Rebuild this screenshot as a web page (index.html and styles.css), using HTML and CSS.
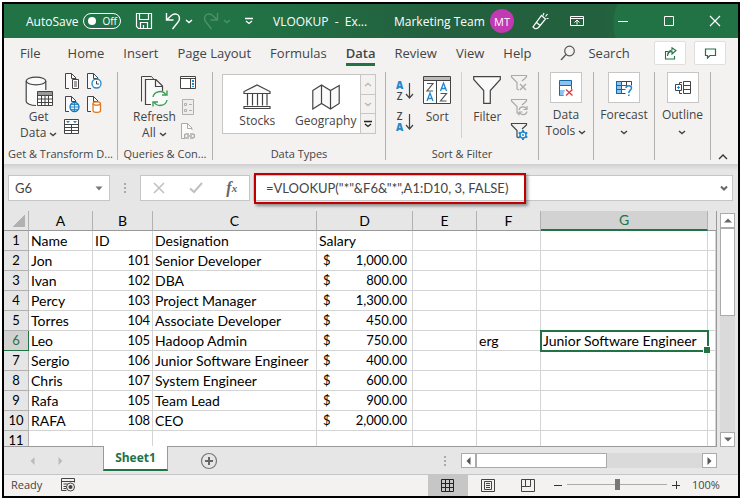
FILE: index.html
```html
<!DOCTYPE html>
<html lang="en">

<head>
	<meta charset="UTF-8">
	<meta name="viewport" content="width=device-width, initial-scale=1.0">
	<title>VLOOKUP - Excel</title>
	<link rel="stylesheet" href="styles.css">
</head>

<body>
	<svg class="sprite" aria-hidden="true">
		<symbol id="caret" viewBox="0 0 8 5"><path d="M1 1l3 2.500L7 1" fill="none" stroke="currentColor" stroke-width="1.500"/></symbol>
		<symbol id="doc" viewBox="0 0 16 18"><path d="M1.500 1.500h6l4.500 4.500v10.500H1.500z" fill="#fafafa"/><path d="M5 16.500H1.500v-15h6l4.500 4.500M7.500 1.500v5H12V8" fill="none" stroke="currentColor"/></symbol>
		<symbol id="funnel" viewBox="0 0 18 18"><path d="M12 7l4.500-4V1.500h-15V3l5.500 5.500V15l2 1" fill="none" stroke="currentColor" stroke-width="1.200"/></symbol>
	</svg>

	<div class="app">
		<header class="titlebar">
			<label class="autosave">AutoSave <span class="toggle"><input type="checkbox"><span>Off</span></span></label>
			<button class="save" aria-label="Save"><svg width="18" height="18" viewBox="0 0 18 18"><path d="M1.500 1.500h15v15h-13l-2-2zM4.500 1.500v6h9v-6M5.500 16v-5.500h7V16M8.500 16v-3" fill="none" stroke="#fff" stroke-width="1.200"/></svg></button>
			<button class="undo" aria-label="Undo"><svg width="16" height="18" viewBox="0 0 16 18"><path d="M1.500 1v7h7M2 7.500l5-4.500c3-2 6.500-1 7.300 2s-.5 4.500-2 6L7.500 17" fill="none" stroke="#fff" stroke-width="1.400"/></svg></button>
			<button class="undo-more" aria-label="Undo list"><svg width="8" height="5"><use href="#caret"/></svg></button>
			<button class="redo" aria-label="Redo" disabled><svg width="16" height="18" viewBox="0 0 16 18"><path d="M14.500 1v7h-7M14 7.500L9 3C6 1 2.500 2 1.700 5s.5 4.500 2 6l4.800 6" fill="none" stroke="currentColor" stroke-width="1.400"/></svg></button>
			<button class="redo-more" aria-label="Redo list" disabled><svg width="8" height="5"><use href="#caret"/></svg></button>
			<button class="customize" aria-label="Customize toolbar"><svg width="8" height="8" viewBox="0 0 8 8"><path d="M0 1.500h8M1 4l3 2.500L7 4" fill="none" stroke="#fff" stroke-width="1.300"/></svg></button>
			<span class="doc-title">VLOOKUP&nbsp; - &nbsp;Ex...</span>
			<span class="user">Marketing Team</span>
			<button class="avatar">MT</button>
			<button aria-label="Coming soon"><svg width="18" height="18" viewBox="0 0 18 18"><path d="M10.500 3.500l4 3.500-7 8.500c-1.500 1.300-3 1.500-4 .8l-1.500-1.300zM5.500 10.500l3.500 3M12 3.500l1-2.500M14.500 4.500l2-2.500M15.500 6.500h2" fill="none" stroke="#fff" stroke-width="1.200"/></svg></button>
			<button class="display" aria-label="Ribbon display options"><svg width="14" height="12" viewBox="0 0 14 12"><path d="M.5 1.500h13v9H.5zM.5 3.500h13M7 9.500V5.500M4.500 7.500L7 5l2.500 2.500" fill="none" stroke="#fff"/></svg></button>
			<div class="window-buttons">
				<button aria-label="Minimize"><svg width="12" height="12"><path d="M1 6.500h10" stroke="#fff"/></svg></button>
				<button aria-label="Maximize"><svg width="12" height="12"><path d="M1.500 1.500h9v9h-9z" fill="none" stroke="#fff"/></svg></button>
				<button aria-label="Close"><svg width="12" height="12"><path d="M1 1l10 10M11 1L1 11" stroke="#fff" stroke-width="1.200"/></svg></button>
			</div>
		</header>

		<nav class="tabs">
			<a href="#file" class="file">File</a>
			<a href="#home">Home</a>
			<a href="#insert">Insert</a>
			<a href="#layout">Page Layout</a>
			<a href="#formulas">Formulas</a>
			<a href="#data" class="active">Data</a>
			<a href="#review">Review</a>
			<a href="#view">View</a>
			<a href="#help">Help</a>
			<button class="search"><svg width="16" height="16" viewBox="0 0 16 16"><path d="M6 9.500L1 15" stroke="#555" stroke-width="1.300"/><circle cx="9.500" cy="6" r="4.800" fill="none" stroke="#555" stroke-width="1.200"/></svg>Search</button>
			<div class="tab-actions">
				<button aria-label="Share"><svg width="13" height="13" viewBox="0 0 13 13"><path d="M4 4.500H1.500v7.500h9V9M3.500 9C4 5.500 6 4.500 8 4.500V7l4-3.500L8 .8v2.200C5 3.500 3.500 5.500 3.500 9z" fill="none" stroke="#217346" stroke-width="1.100"/></svg></button>
				<button aria-label="Comments"><svg width="13" height="13" viewBox="0 0 13 13"><path d="M1.500 2h10v6.500H6L3.500 11V8.500h-2z" fill="none" stroke="#217346" stroke-width="1.200"/></svg></button>
			</div>
		</nav>

		<section class="ribbon">
			<div class="group get-data">
				<div class="tools">
					<button class="big">
						<svg width="28" height="32" viewBox="0 0 28 32"><path d="M1.200 5v20.500c0 2 4.500 4 9.800 4h9.800V5z" fill="#fafafa"/><ellipse cx="11" cy="5" rx="9.800" ry="3.800" fill="#fafafa" stroke="#444" stroke-width="1.200"/><path d="M1.200 5v20.500c0 2 4.500 4 9.800 4M20.800 5v9" fill="none" stroke="#444" stroke-width="1.200"/><path d="M12.500 15.500h15v14h-15z" fill="#fff" stroke="#444"/><path d="M13 16h14v3H13z" fill="#999"/><path d="M12.500 19.500h15M12.500 23h15M12.500 26.500h15M16.500 19v10.500M20 19v10.500M23.500 19v10.500" stroke="#444"/></svg>
						<span>Get<br>Data <svg width="8" height="5"><use href="#caret"/></svg></span>
					</button>
					<div class="small-grid">
						<button aria-label="From text"><svg width="16" height="18"><use href="#doc"/><path d="M8.500 7.500h6v9h-6z" fill="#fff" stroke="#444"/><path d="M10 10h3M10 12h3M10 14h3" stroke="#444"/></svg></button>
						<button aria-label="Recent sources"><svg width="16" height="18"><use href="#doc"/><circle cx="10.500" cy="11.500" r="4.500" fill="#fff" stroke="#2188cc" stroke-width="1.300"/><path d="M10.500 9v3H13" fill="none" stroke="#444"/></svg></button>
						<button aria-label="From web"><svg width="16" height="18"><use href="#doc"/><circle cx="10.500" cy="12" r="4.500" fill="#d8edfa" stroke="#1677b8" stroke-width="1.300"/><path d="M6 12h9M10.500 7.500v9M7 9.500h7M7 14.500h7" stroke="#1677b8" stroke-width=".8"/></svg></button>
						<button aria-label="Existing connections"><svg width="16" height="18"><use href="#doc"/><path d="M7 8.500v7c0 2.500 7.500 2.500 7.500 0v-7" fill="#fff" stroke="#e07a22" stroke-width="1.300"/><ellipse cx="10.700" cy="8.500" rx="3.700" ry="1.700" fill="#fff" stroke="#e07a22" stroke-width="1.300"/></svg></button>
						<button aria-label="From table"><svg width="16" height="18"><path d="M.5 1.500h14v14H.5z" fill="#fff" stroke="#444"/><path d="M.5 6.500h14M.5 9.500h14M.5 12.500h14M7.500 6.500v9" stroke="#444"/><path d="M2 3h4L4 5.300zM9 3h4l-2 2.300z" fill="#2188cc"/></svg></button>
					</div>
				</div>
				<h2>Get &amp; Transform D...</h2>
			</div>

			<div class="group queries">
				<div class="tools">
					<button class="big">
						<svg width="28" height="32" viewBox="0 0 28 32"><path d="M1.500 25.500V.5h10l2.500 3" fill="none" stroke="#444"/><path d="M5.500 3.500h11l6 6v19h-17z" fill="#fafafa"/><path d="M11 28.500H5.500v-25h10.500l6.500 6.500v5M15.500 4v6.500h7" fill="none" stroke="#444" stroke-width="1.200"/><circle cx="20" cy="22.500" r="8" fill="#fafafa"/><path d="M13 21c1-6 10-7.500 13-2M27 14.500V19h-5M27 24c-1 6-10 7.500-13 2M13 30.500V26h5" fill="none" stroke="#3a9e55" stroke-width="1.400"/></svg>
						<span>Refresh<br>All <svg width="8" height="5"><use href="#caret"/></svg></span>
					</button>
					<div class="small-stack">
						<button aria-label="Queries and connections"><svg width="16" height="18"><path d="M.5 2.500h15v12H.5z" fill="#fff" stroke="#444"/><path d="M.5 4.500h15M10.500 4.500v10" stroke="#444"/><path d="M13 6v7" stroke="#2188cc" stroke-width="2" stroke-dasharray="2 1"/></svg></button>
						<button aria-label="Properties" disabled><svg width="16" height="18"><path d="M2.500 1.500h11v15h-11z" fill="#eee" stroke="#b0b0b0"/><path d="M4.500 5.500h2v2h-2zM4.500 11.500h2v2h-2zM9 6.500h3M9 12.500h3" fill="none" stroke="#b0b0b0"/></svg></button>
						<button aria-label="Edit links" class="faded" disabled><svg width="16" height="18"><use href="#doc"/><path d="M9 12H6.500a2 2 0 0 0 0 4H9M10 12h2.500a2 2 0 0 1 0 4H10M7 14h5" fill="none" stroke="#aaa" stroke-width="1.300"/></svg></button>
					</div>
				</div>
				<h2>Queries &amp; Con...</h2>
			</div>

			<div class="group types">
				<div class="gallery">
					<button><svg width="28" height="26" viewBox="0 0 28 26"><path d="M1 9.500V7.500L14 1l13 6.500v2zM1 24.500v-2h26v2zM4.500 9.500v12M9.500 9.500v12M14.500 9.500v12M19.500 9.500v12M24 9.500v12" fill="#fafafa" stroke="#444" stroke-width="1.200"/></svg>Stocks</button>
					<button><svg width="28" height="26" viewBox="0 0 28 26"><path d="M.8 6.500L9.500 1l9 5.500 8.700-5v18L18.500 25l-9-5.500L.8 25zM9.500 1v18.500M18.500 6.500V25" fill="#fafafa" stroke="#444" stroke-width="1.200"/></svg>Geography</button>
					<div class="gallery-scroll">
						<button aria-label="Up" disabled><svg width="8" height="5"><path d="M1 4l3-2.500L7 4" fill="none" stroke="currentColor" stroke-width="1.500"/></svg></button>
						<button aria-label="Down" disabled><svg width="8" height="5"><use href="#caret"/></svg></button>
						<button aria-label="More"><svg width="8" height="8" viewBox="0 0 8 8"><path d="M0 1.500h8M1 4l3 2.500L7 4" fill="none" stroke="#222" stroke-width="1.300"/></svg></button>
					</div>
				</div>
				<h2>Data Types</h2>
			</div>

			<div class="group sort-filter">
				<div class="tools">
					<div class="sort-stack">
						<button aria-label="Sort A to Z"><span class="letters"><b>A</b><span>Z</span></span><svg width="9" height="18"><path d="M4.500 1v15M1 12l3.500 4L8 12" fill="none" stroke="#444" stroke-width="1.200"/></svg></button>
						<button aria-label="Sort Z to A"><span class="letters"><span>Z</span><b>A</b></span><svg width="9" height="18"><path d="M4.500 1v15M1 12l3.500 4L8 12" fill="none" stroke="#444" stroke-width="1.200"/></svg></button>
					</div>
					<button class="big sort">
						<svg width="28" height="32" viewBox="0 0 28 32"><path d="M.5.5h27v27H.5z" fill="#fff" stroke="#444"/><path d="M1 1h26v3H1z" fill="#bbb"/><path d="M.5 4.500h27M13.500 4.500v23" stroke="#444"/><path d="M4 7.500h6L4 15h6M17.500 17.500h6l-6 7.500h6" fill="none" stroke="#555" stroke-width="1.200"/><path d="M4 25l3-8 3 8M5 22.500h4M17.500 15l3-8 3 8M18.500 12.500h4" fill="none" stroke="#2188cc" stroke-width="1.300"/></svg>
						<span>Sort</span>
					</button>
					<button class="big filter">
						<svg width="28" height="32" viewBox="0 0 28 32"><path d="M.7.7h26.600v2.800l-10 11V27.300h-6.600V14.500L.7 3.500z" fill="#fafafa" stroke="#444" stroke-width="1.200"/></svg>
						<span>Filter</span>
					</button>
					<div class="small-stack">
						<button aria-label="Clear" class="faded" disabled><svg width="18" height="18"><use href="#funnel"/><path d="M10 10l6 6M16 10l-6 6" stroke="#aaa" stroke-width="1.400"/></svg></button>
						<button aria-label="Reapply" class="faded" disabled><svg width="18" height="18"><use href="#funnel"/><path d="M9 12c1-4 6-4 7.500-1M17 8v3.500h-3.500M17 13.500c-1 4-6 4-7.500 1M9 17.500V14h3.500" fill="none" stroke="#aaa" stroke-width="1.200"/></svg></button>
						<button aria-label="Advanced"><svg width="18" height="18"><use href="#funnel"/><circle cx="13" cy="13" r="3" fill="#fff" stroke="#2188cc" stroke-width="1.500"/><path d="M13 8v2M13 16v2M8.700 10.500l1.700 1M15.600 14.500l1.700 1M8.700 15.500l1.700-1M15.600 11.500l1.700-1" stroke="#2188cc" stroke-width="2"/><circle cx="13" cy="13" r="1" fill="#2188cc"/></svg></button>
					</div>
				</div>
				<h2>Sort &amp; Filter</h2>
			</div>

			<div class="group data-tools">
				<button class="boxed">
					<span class="box"><svg width="18" height="18"><path d="M2.500 1.500h12v5h-12z" fill="#8ac4ee" stroke="#1766a6"/><path d="M14.500 6.500v4M2.500 6.500v10h4" fill="none" stroke="#1766a6"/><path d="M3 11h5l-2 5.500H3z" fill="#8ac4ee"/><path d="M9 10.500l6.500 6M15.500 10.500L9 16.500" stroke="#e0393e" stroke-width="1.400"/></svg></span>
					<span>Data<br>Tools <svg width="8" height="5"><use href="#caret"/></svg></span>
				</button>
			</div>
			<div class="group forecast">
				<button class="boxed">
					<span class="box"><svg width="18" height="18"><path d="M1.500 2.500h15v4M1.500 2.500v12h9M11.500 2.500v5" fill="none" stroke="#444"/><path d="M1.500 2.500h5v12h-5z" fill="#8ac4ee" stroke="#1766a6"/><path d="M1.500 6.500h10M1.500 10.500h9M6.500 2.500v12" stroke="#1766a6"/><path d="M11 9c0-3 5.500-3 5.500 0 0 2-2.700 2.300-2.700 5M13.800 15.500V17" fill="none" stroke="#2188cc" stroke-width="1.500"/></svg></span>
					<span>Forecast<br><svg width="8" height="5"><use href="#caret"/></svg></span>
				</button>
			</div>
			<div class="group outline">
				<button class="boxed">
					<span class="box"><svg width="18" height="18"><path d="M9.500 2.500h7v12h-7zM9.500 6.500h7M9.500 10.500h7M8 3.500H5.500V6M8 14.500H5.500V12" fill="none" stroke="#444"/><path d="M1.500 5.500h6v6h-6z" fill="#fff" stroke="#444"/><path d="M4.500 7v3M3 8.500h3" stroke="#2188cc"/></svg></span>
					<span>Outline<br><svg width="8" height="5"><use href="#caret"/></svg></span>
				</button>
			</div>
			<button class="collapse" aria-label="Collapse ribbon"><svg width="10" height="6"><path d="M1 5l4-4 4 4" fill="none" stroke="#333" stroke-width="1.300"/></svg></button>
		</section>

		<section class="formula-bar">
			<div class="name-box">
				<input type="text" value="G6" aria-label="Name box">
				<button aria-label="Names"><svg width="8" height="5"><path d="M.5.5h7L4 4.500z" fill="#777"/></svg></button>
			</div>
			<span class="dots"></span>
			<div class="formula-buttons">
				<button aria-label="Cancel"><svg width="12" height="12"><path d="M1 1l10 10M11 1L1 11" stroke="#c0c0c0" stroke-width="1.600"/></svg></button>
				<button aria-label="Enter"><svg width="14" height="12"><path d="M1 6.500l4 3.500 8-9" fill="none" stroke="#c0c0c0" stroke-width="2"/></svg></button>
				<button class="fx" aria-label="Insert function">f<small>x</small></button>
			</div>
			<div class="formula">
				<input type="text" aria-label="Formula" value='=VLOOKUP("*"&amp;F6&amp;"*",A1:D10, 3, FALSE)'>
				<span class="highlight"></span>
				<button aria-label="Expand"><svg width="8" height="6"><path d="M1 1.500l3 3 3-3" fill="none" stroke="#666" stroke-width="2"/></svg></button>
			</div>
		</section>

		<main class="workspace">
			<div class="sheet">
				<table>
					<colgroup>
						<col class="c-num"><col class="c-a"><col class="c-b"><col class="c-c"><col class="c-d"><col class="c-e"><col class="c-f"><col class="c-g"><col>
					</colgroup>
					<thead>
						<tr><th class="corner"></th><th>A</th><th>B</th><th>C</th><th>D</th><th>E</th><th>F</th><th class="current">G</th><th></th></tr>
					</thead>
					<tbody>
						<tr><th>1</th><td>Name</td><td>ID</td><td>Designation</td><td>Salary</td><td></td><td></td><td></td><td></td></tr>
						<tr><th>2</th><td>Jon</td><td class="num">101</td><td>Senior Developer</td><td class="money"><span>$</span>1,000.00</td><td></td><td></td><td></td><td></td></tr>
						<tr><th>3</th><td>Ivan</td><td class="num">102</td><td>DBA</td><td class="money"><span>$</span>800.00</td><td></td><td></td><td></td><td></td></tr>
						<tr><th>4</th><td>Percy</td><td class="num">103</td><td>Project Manager</td><td class="money"><span>$</span>1,300.00</td><td></td><td></td><td></td><td></td></tr>
						<tr><th>5</th><td>Torres</td><td class="num">104</td><td>Associate Developer</td><td class="money"><span>$</span>450.00</td><td></td><td></td><td></td><td></td></tr>
						<tr><th class="current">6</th><td>Leo</td><td class="num">105</td><td>Hadoop Admin</td><td class="money"><span>$</span>750.00</td><td></td><td>erg</td><td class="selected">Junior Software Engineer</td><td></td></tr>
						<tr><th>7</th><td>Sergio</td><td class="num">106</td><td>Junior Software Engineer</td><td class="money"><span>$</span>400.00</td><td></td><td></td><td></td><td></td></tr>
						<tr><th>8</th><td>Chris</td><td class="num">107</td><td>System Engineer</td><td class="money"><span>$</span>600.00</td><td></td><td></td><td></td><td></td></tr>
						<tr><th>9</th><td>Rafa</td><td class="num">105</td><td>Team Lead</td><td class="money"><span>$</span>900.00</td><td></td><td></td><td></td><td></td></tr>
						<tr><th>10</th><td>RAFA</td><td class="num">108</td><td>CEO</td><td class="money"><span>$</span>2,000.00</td><td></td><td></td><td></td><td></td></tr>
						<tr><th>11</th><td></td><td></td><td></td><td></td><td></td><td></td><td></td><td></td></tr>
					</tbody>
				</table>
			</div>
			<div class="vscroll">
				<button aria-label="Scroll up"><svg width="8" height="5"><path d="M0 4.500h8L4 .5z" fill="#666"/></svg></button>
				<div class="thumb"></div>
				<button aria-label="Scroll down"><svg width="8" height="5"><path d="M0 .5h8L4 4.500z" fill="#666"/></svg></button>
			</div>
		</main>

		<div class="sheet-bar">
			<button class="nav" aria-label="Previous sheet"><svg width="5" height="8"><path d="M4.500 0v8L.5 4z" fill="#bbb"/></svg></button>
			<button class="nav" aria-label="Next sheet"><svg width="5" height="8"><path d="M.5 0v8l4-4z" fill="#bbb"/></svg></button>
			<button class="sheet-tab">Sheet1</button>
			<button class="add" aria-label="New sheet"><svg width="18" height="18"><circle cx="9" cy="9" r="7.500" fill="none" stroke="#777" stroke-width="1.200"/><path d="M9 5v8M5 9h8" stroke="#666" stroke-width="2"/></svg></button>
			<span class="dots"></span>
			<div class="hscroll">
				<button aria-label="Scroll left"><svg width="5" height="8"><path d="M4.500 0v8L.5 4z" fill="#555"/></svg></button>
				<div class="thumb"></div>
				<button aria-label="Scroll right"><svg width="5" height="8"><path d="M.5 0v8l4-4z" fill="#555"/></svg></button>
			</div>
		</div>

		<footer class="status">
			<span class="ready">Ready</span>
			<button class="macro" aria-label="Record macro"><svg width="15" height="14"><path d="M.5.5h13v4M.5.5v12h5M.5 3.500h13M2.500 6h4M2.500 8.500h3M2.500 10.500h3" fill="none" stroke="#444"/><circle cx="9.500" cy="9" r="4" fill="#f3f2f1" stroke="#444"/><circle cx="9.500" cy="9" r="2" fill="#444"/></svg></button>
			<div class="views">
				<button class="on" aria-label="Normal"><svg width="14" height="14"><path d="M.5.5h12v12H.5zM.5 4.500h12M.5 8.500h12M4.500.5v12M8.500.5v12" fill="none" stroke="#222"/></svg></button>
				<button aria-label="Page layout"><svg width="14" height="14"><path d="M.5.5h13v12H.5zM3.500 2.500h7v8h-7zM5 4.500h4M5 6.500h4M5 8.500h4" fill="none" stroke="#444"/></svg></button>
				<button aria-label="Page break"><svg width="14" height="14"><path d="M.5.5h13v12H.5zM4.500.5v7M9.500.5v7h-9" fill="none" stroke="#444"/></svg></button>
			</div>
			<button class="zoom-step" aria-label="Zoom out"><svg width="8" height="8"><path d="M0 4.500h8" stroke="#333"/></svg></button>
			<input type="range" class="zoom" min="0" max="100" value="50" aria-label="Zoom">
			<button class="zoom-step" aria-label="Zoom in"><svg width="8" height="8"><path d="M0 4.500h8M4.500 0v8" stroke="#333"/></svg></button>
			<span class="percent">100%</span>
		</footer>
	</div>
</body>

</html>
```
FILE: styles.css
```css
* {
	box-sizing: border-box;
}

body {
	margin: 2px;
	background: #fff;
	color: #444;
	font-family: 'Open Sans', 'Noto Sans', sans-serif;
	font-size: 12px;
}

button {
	display: flex;
	align-items: center;
	justify-content: center;
	padding: 0;
	border: 0;
	background: none;
	color: inherit;
	font: inherit;
}

svg {
	flex: none;
}

a {
	color: inherit;
	text-decoration: none;
}

.sprite {
	display: none;
}

.app {
	display: flex;
	flex-direction: column;
	height: calc(100vh - 4px);
	border: 2px solid #000;
	background: #e6e6e6;
}

/* title bar */

.titlebar {
	display: flex;
	flex: none;
	align-items: center;
	height: 34px;
	padding: 0 17px 0 22px;
	background: radial-gradient(circle at 660px 20px, #217346 50px, transparent 51px), linear-gradient(90deg, #217346 230px, #23613e 420px, #23613e 600px, #217346 680px);
	color: #fff;
}

.autosave {
	display: flex;
	align-items: center;
	gap: 5px;
	width: 109px;
	white-space: nowrap;
}

.toggle {
	display: flex;
	align-items: center;
	gap: 6px;
	width: 38px;
	height: 16px;
	padding-left: 4px;
	border: 1px solid #fff;
	border-radius: 8px;
	font-size: 10px;
}

.toggle input {
	appearance: none;
	width: 8px;
	height: 8px;
	margin: 0;
	border-radius: 50%;
	background: #fff;
}

.undo {
	margin-left: 12px;
}

.undo-more,
.redo-more {
	margin-left: 4px;
}

.redo {
	margin-left: 10px;
}

.redo,
.redo-more {
	color: #4d9069;
}

.customize {
	margin-left: 14px;
}

.doc-title {
	width: 121px;
	margin-left: 20px;
	white-space: nowrap;
}

.user {
	width: 96px;
	white-space: nowrap;
}

.avatar {
	width: 24px;
	height: 24px;
	margin-right: 17px;
	border-radius: 50%;
	background: #c239b3;
	font-size: 11px;
}

.display {
	margin-left: 21px;
}

.window-buttons {
	display: flex;
	gap: 34px;
	margin-left: auto;
}

/* tabs */

.tabs {
	display: flex;
	flex: none;
	gap: 19px;
	height: 28px;
	padding: 0 12px 0 16px;
	background: #f3f2f1;
	font-size: 13px;
	line-height: 30px;
	white-space: nowrap;
}

.file {
	margin-right: 8px;
}

.tabs .active {
	border-bottom: 3px solid #217346;
	font-weight: 600;
}

.search {
	gap: 12px;
	margin-left: 10px;
	padding-top: 2px;
}

.tab-actions {
	display: flex;
	gap: 8px;
	margin-left: auto;
	padding-top: 3px;
}

.tab-actions button {
	width: 32px;
	height: 24px;
	border: 1px solid #e1dfdd;
	border-radius: 2px;
	background: #fff;
}

/* ribbon */

.ribbon {
	display: flex;
	flex: none;
	height: 98px;
	padding: 6px 10px 4px 0;
	background: #f3f2f1;
	line-height: 16px;
}

.group {
	display: flex;
	flex-direction: column;
	justify-content: space-between;
	border-right: 1px solid #b3b0ad;
}

.group h2 {
	margin: 0;
	font-size: 11px;
	font-weight: 400;
	line-height: 12px;
	text-align: center;
	white-space: nowrap;
}

.tools {
	display: flex;
}

.big {
	flex-direction: column;
	gap: 1px;
	padding-top: 4px;
}

.get-data {
	width: 114px;
}

.get-data .tools {
	gap: 7px;
	padding-left: 16px;
}

.small-grid {
	display: grid;
	grid-template-columns: 16px 16px;
	gap: 5px 6px;
	align-content: start;
}

.small-stack {
	display: flex;
	flex-direction: column;
	gap: 6px;
	padding-top: 2px;
}

.faded {
	color: #aaa;
}

.queries {
	width: 95px;
}

.queries .tools {
	gap: 4px;
	padding-left: 15px;
}

.types {
	width: 173px;
}

.gallery {
	display: flex;
	height: 60px;
	margin: 2px 9px;
	border: 1px solid #c8c6c4;
	background: #fff;
}

.gallery > button {
	flex: 1;
	flex-direction: column;
	gap: 3px;
	padding-top: 4px;
}

.gallery-scroll {
	display: flex;
	flex-direction: column;
	width: 15px;
	border-left: 1px solid #c8c6c4;
}

.gallery-scroll button {
	flex: 1;
	background: #f3f2f1;
}

.gallery-scroll button:disabled {
	border-bottom: 1px solid #c8c6c4;
	color: #b8b8b8;
}

.sort-filter {
	width: 153px;
}

.sort-filter .tools {
	padding-left: 10px;
}

.sort-stack {
	display: flex;
	flex-direction: column;
	gap: 9px;
	padding-top: 8px;
}

.sort-stack button {
	gap: 2px;
	font-size: 10px;
	font-weight: 600;
	line-height: 11px;
}

.letters {
	display: grid;
}

.sort-stack b {
	color: #2188cc;
}

.sort {
	margin: 0 10px 0 9px;
}

.filter {
	height: 66px;
	padding-left: 11px;
	border-left: 1px solid #d2d0ce;
}

.sort,
.filter {
	justify-content: flex-start;
}

.sort-filter .small-stack {
	margin-left: 9px;
}

.boxed {
	flex-direction: column;
	gap: 4px;
	white-space: nowrap;
}

.box {
	display: flex;
	align-items: center;
	justify-content: center;
	width: 32px;
	height: 31px;
	border: 1px solid #c8c6c4;
	background: #fff;
}

.data-tools {
	width: 55px;
}

.forecast {
	width: 61px;
}

.outline {
	width: 56px;
}

.collapse {
	align-self: flex-end;
	margin-left: auto;
}

/* formula bar */

.formula-bar {
	display: flex;
	flex: none;
	height: 47px;
	padding: 11px 5px 10px 4px;
	background: linear-gradient(#cfcfcf, #e6e6e6 6px);
}

.formula-bar input {
	flex: 1;
	min-width: 0;
	border: 0;
	background: none;
	color: #444;
	font-family: Lato, 'Open Sans', sans-serif;
	font-size: 13px;
}

.name-box,
.formula-buttons,
.formula {
	display: flex;
	align-items: center;
	border: 1px solid #c6c6c6;
	background: #fff;
}

.name-box {
	width: 102px;
	padding: 0 6px 0 4px;
}

.dots {
	align-self: center;
	width: 2px;
	height: 10px;
	background: repeating-linear-gradient(#aaa 0 2px, transparent 2px 4px);
}

.formula-bar .dots {
	margin: 0 14px;
}

.formula-buttons {
	justify-content: space-around;
	width: 110px;
}

.fx {
	color: #666;
	font-family: 'Liberation Serif', serif;
	font-size: 16px;
	font-style: italic;
	font-weight: 700;
}

.fx small {
	font-size: 11px;
}

.formula {
	position: relative;
	flex: 1;
	margin-left: 3px;
	padding: 0 4px 0 10px;
}

.highlight {
	position: absolute;
	top: -3px;
	left: 0;
	width: 272px;
	height: 31px;
	border: 2px solid #c00000;
	box-shadow: 2px 2px 3px #0006;
	pointer-events: none;
}

/* sheet */

.workspace {
	display: flex;
	flex: 1;
	min-height: 0;
	padding-right: 3px;
}

.sheet {
	flex: 1;
	overflow: hidden;
	border-right: 1px solid #999;
	border-bottom: 1px solid #999;
}

.sheet table {
	width: 100%;
	border-spacing: 0;
	table-layout: fixed;
	color: #000;
	font-family: Lato, 'Open Sans', sans-serif;
	font-size: 14px;
	line-height: 19px;
}

.c-num {
	width: 25px;
}

.c-a,
.c-e,
.c-f {
	width: 64px;
}

.c-b {
	width: 60px;
}

.c-c {
	width: 164px;
}

.c-d {
	width: 96px;
}

.c-g {
	width: 167px;
}

.sheet th,
.sheet td {
	height: 20px;
	padding: 0 2px;
	border-right: 1px solid #d4d4d4;
	border-bottom: 1px solid #d4d4d4;
	background: #fff;
	white-space: nowrap;
}

.sheet th {
	padding: 0;
	border-color: #b1b1b1;
	background: #e6e6e6;
	font-weight: 400;
}

.sheet thead th {
	border-bottom-color: #999;
}

.sheet thead th:last-child {
	border-right: 0;
}

.sheet .corner {
	background: linear-gradient(135deg, transparent 50%, #b1b1b1 50%) 9px 4px / 12px 12px no-repeat #e6e6e6;
}

.sheet .current {
	border-color: #217346;
	background: #d2d2d2;
	color: #217346;
}

.sheet thead .current {
	border-right-color: #b1b1b1;
	border-bottom: 2px solid #217346;
	line-height: 18px;
}

.sheet tbody th,
.sheet .num,
.sheet .money {
	font-size: 13px;
}

.sheet .num {
	text-align: right;
}

.sheet .money {
	padding: 0 5px 0 6px;
	text-align: right;
}

.money span {
	float: left;
}

.sheet .selected {
	position: relative;
	outline: 2px solid #217346;
	outline-offset: -1px;
}

.selected::after {
	content: '';
	position: absolute;
	right: -3px;
	bottom: -3px;
	width: 6px;
	height: 6px;
	border: solid #fff;
	border-width: 1px 0 0 1px;
	background: #217346;
}

/* scroll bars */

.vscroll,
.hscroll {
	display: flex;
	background: #dadada;
}

.vscroll {
	flex-direction: column;
	width: 15px;
	margin: 2px 0 0 3px;
}

.vscroll button,
.hscroll button,
.thumb {
	flex: none;
	width: 15px;
	height: 15px;
	border: 1px solid #ababab;
	background: #fff;
}

.vscroll .thumb {
	height: 88px;
}

.vscroll button:last-child {
	margin-top: auto;
}

.sheet-bar {
	display: flex;
	flex: none;
	align-items: center;
	height: 28px;
	padding-right: 21px;
	border-bottom: 1px solid #c6c6c6;
}

.nav {
	width: 28px;
}

.nav:first-child {
	margin-left: 14px;
}

.sheet-tab {
	align-self: flex-start;
	width: 65px;
	height: 25px;
	margin: -1px 32px 0 29px;
	border: solid #999;
	border-width: 0 1px;
	border-bottom: 2px solid #217346;
	background: #fff;
	color: #217346;
	font-weight: 700;
}

.sheet-bar .dots {
	margin-left: auto;
}

.hscroll {
	width: 256px;
	margin-left: 15px;
}

.hscroll .thumb {
	width: 131px;
}

.hscroll button:last-child {
	margin-left: auto;
}

/* status bar */

.status {
	display: flex;
	flex: none;
	align-items: center;
	height: 21px;
	padding: 0 16px 2px 7px;
	background: #f3f2f1;
	font-size: 11px;
}

.ready {
	width: 50px;
}

.views {
	display: flex;
	align-self: stretch;
	margin: 0 6px -2px auto;
}

.views button {
	width: 40px;
}

.views .on {
	background: #c6c6c6;
}

.zoom {
	appearance: none;
	width: 100px;
	height: 12px;
	margin: 0 5px;
	background: linear-gradient(#ababab, #ababab) center / 100% 1px no-repeat;
}

.zoom::-webkit-slider-thumb {
	appearance: none;
	width: 5px;
	height: 11px;
	background: #777;
}

.zoom-step {
	width: 8px;
}

.percent {
	width: 30px;
	margin-left: 12px;
}
```
